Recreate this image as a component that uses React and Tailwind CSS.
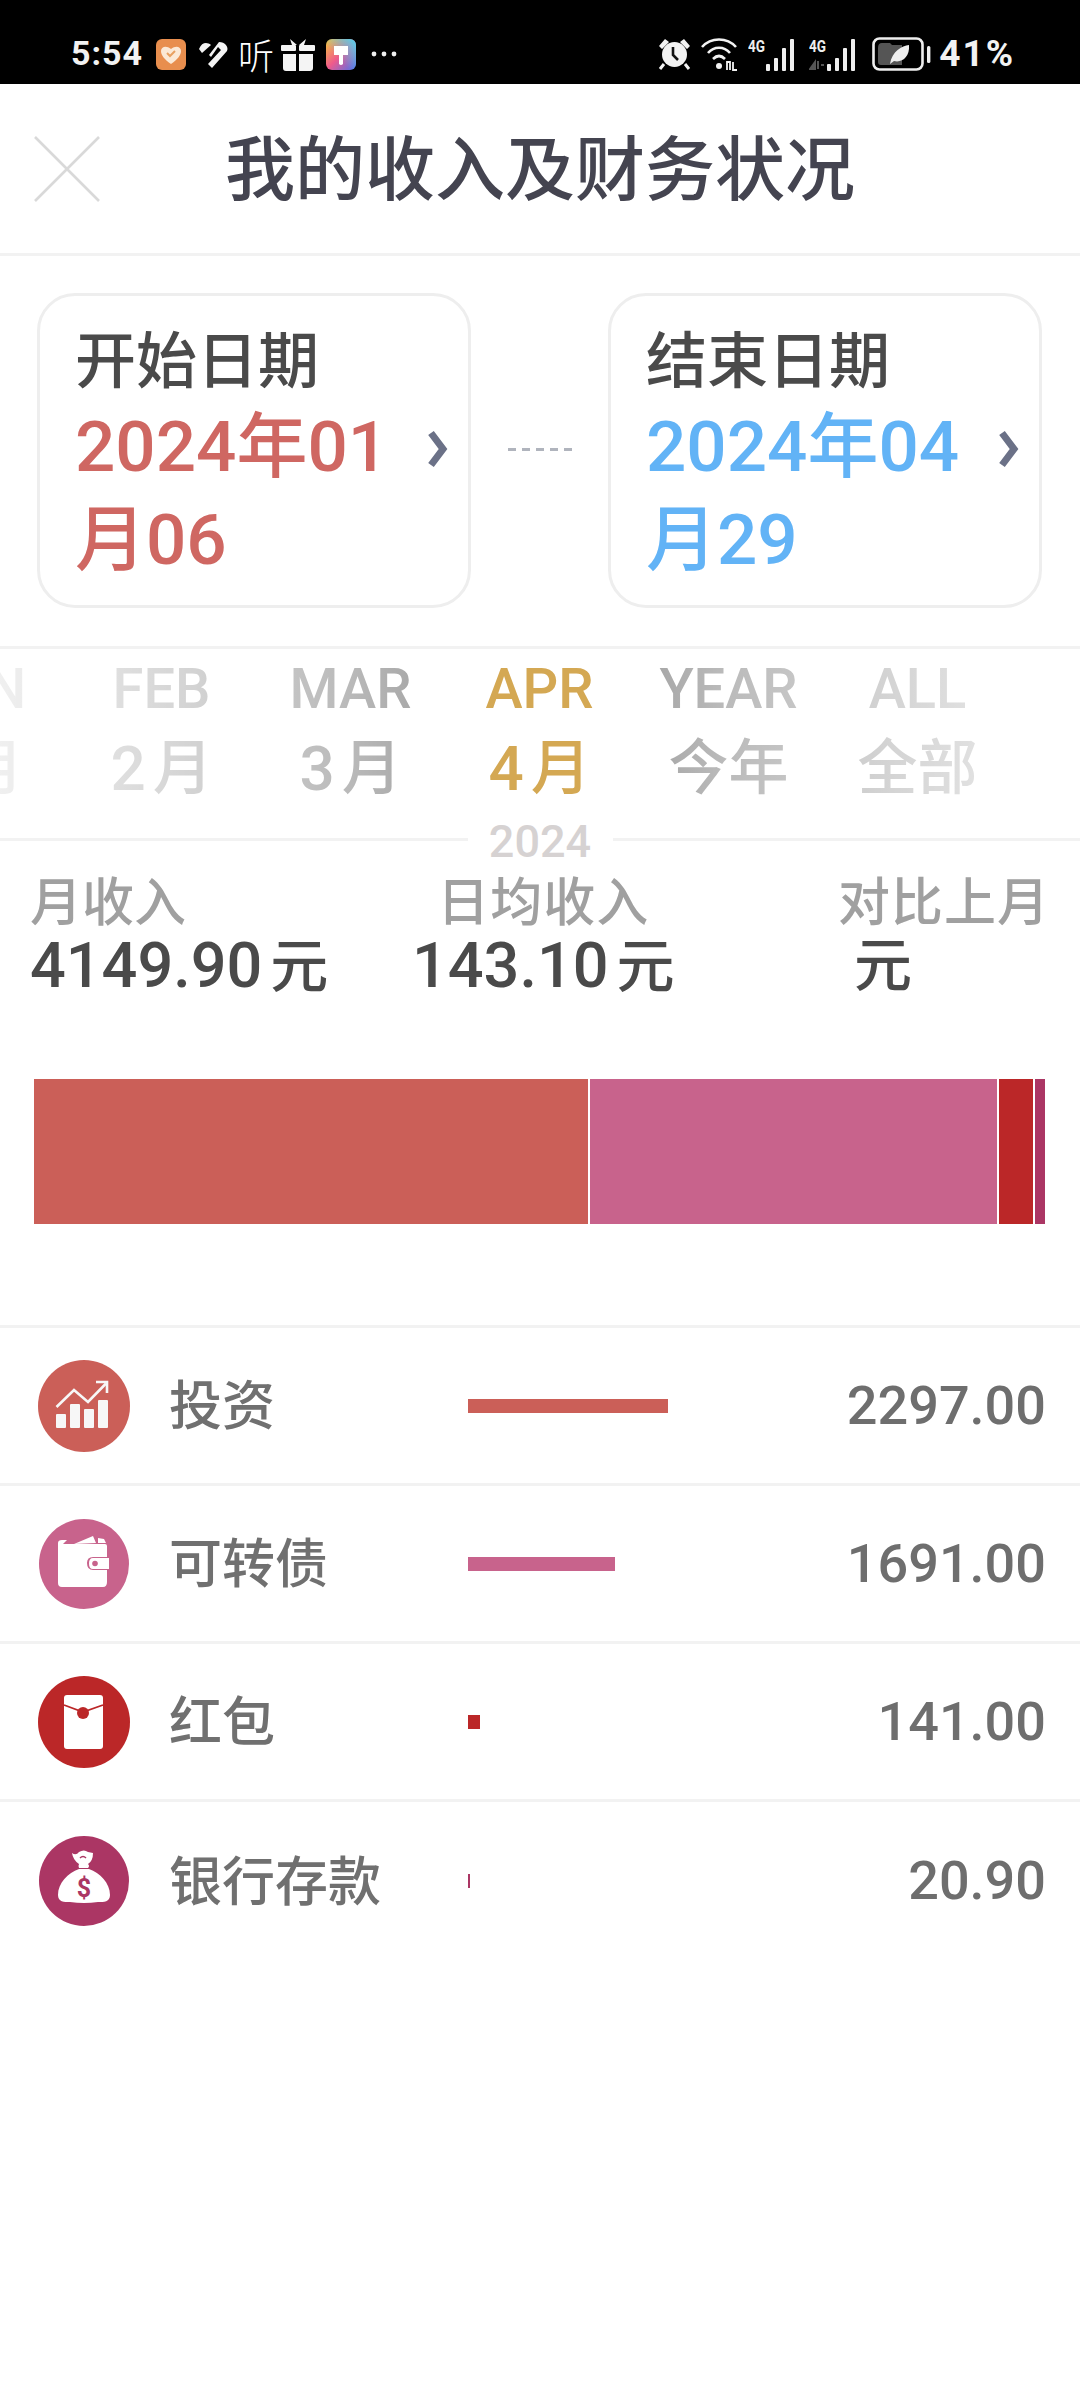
import React from "react";

const font = { fontFamily: '"Roboto","Noto Sans CJK SC",sans-serif' };

function Signal({ dim }) {
  return (
    <svg width="52" height="34" viewBox="0 0 52 34" className="block">
      <text x="0" y="15" fontSize="17" fontWeight="700" fill="#eee" fontFamily="Roboto" textLength="17" lengthAdjust="spacingAndGlyphs">4G</text>
      {dim && <path d="M1 32 L6 25 V32 Z M9 24 V32 M12 28 H15" stroke="#555" strokeWidth="2" fill="#555" />}
      <rect x="18" y="27" width="4" height="7" rx="1" fill="#f0f0f0" />
      <rect x="26" y="21" width="4" height="13" rx="1" fill="#f0f0f0" />
      <rect x="34" y="11" width="4" height="23" rx="1" fill="#f0f0f0" />
      <rect x="42" y="2" width="4" height="32" rx="1" fill="#f0f0f0" />
    </svg>
  );
}

function StatusBar() {
  return (
    <div className="h-[84px] bg-black flex items-start pt-[37px] pl-[71px] pr-[65px] text-[#f2f2f2]">
      <span className="text-[34px] leading-[32px] font-bold tracking-[1px] w-[85px]" style={font}>5:54</span>
      <div className="flex items-center">
        <svg width="30" height="31" viewBox="0 0 30 31" className="block">
          <rect width="30" height="31" rx="6" fill="#e88e4e" />
          <path d="M15 25 C8 20 5 16 5 12 C5 8 10 6 15 10 C20 6 25 8 25 12 C25 16 22 20 15 25 Z" fill="#fbe9d6" />
          <path d="M11 14 L14 17 L19 12" stroke="#e8a060" strokeWidth="2" fill="none" />
        </svg>
        <svg width="32" height="30" viewBox="0 0 32 30" className="block ml-[11px]">
          <path d="M2 10 C5 3 10 3 14 6 L5 14 Z M12 16 L22 3 C28 3 32 8 30 12 L15 29 L11 25 L24 11 L21 8 L14 18 Z" fill="#f4f4f4" />
        </svg>
        <span className="ml-[9px] text-[36px] leading-[34px] font-thin w-[35px] text-white" style={{ fontFamily: '"Noto Sans CJK SC",sans-serif', fontWeight: 300 }}>听</span>
        <svg width="34" height="34" viewBox="0 0 34 34" className="block ml-[8px]">
          <path d="M9 2 L16 8 H11 Z M25 2 L18 8 H23 Z" fill="#f4f4f4" />
          <rect x="0" y="8" width="15" height="6" rx="1" fill="#f4f4f4" />
          <rect x="18" y="8" width="16" height="6" rx="1" fill="#f4f4f4" />
          <path d="M2 17 H15 V34 H5 Q2 34 2 31 Z M18 17 H32 V31 Q32 34 29 34 H18 Z" fill="#f4f4f4" />
        </svg>
        <svg width="30" height="31" viewBox="0 0 30 31" className="block ml-[11px]">
          <defs>
            <linearGradient id="pg" x1="0" y1="0" x2="1" y2="1">
              <stop offset="0" stopColor="#f5c83a" />
              <stop offset="0.5" stopColor="#ef5a8c" />
              <stop offset="1" stopColor="#4a72f0" />
            </linearGradient>
            <linearGradient id="pg2" x1="1" y1="0" x2="0" y2="1">
              <stop offset="0" stopColor="#4ad8f0" stopOpacity="1" />
              <stop offset="0.6" stopColor="#4ad8f0" stopOpacity="0" />
            </linearGradient>
          </defs>
          <rect width="30" height="31" rx="6" fill="url(#pg)" />
          <rect width="30" height="31" rx="6" fill="url(#pg2)" />
          <path d="M8 7 H22 V16 H17 V25 Q15 27 13 25 V16 H8 Z" fill="#fff" />
        </svg>
        <svg width="26" height="8" viewBox="0 0 26 8" className="block ml-[15px]">
          <circle cx="3" cy="4" r="2.4" fill="#eee" />
          <circle cx="13" cy="4" r="2.4" fill="#eee" />
          <circle cx="23" cy="4" r="2.4" fill="#eee" />
        </svg>
      </div>
      <div className="ml-auto flex items-center">
        <svg width="33" height="33" viewBox="0 0 33 33" className="block">
          <path d="M1 8 L7 1 L11 4 L4 11 Z M32 8 L26 1 L22 4 L29 11 Z" fill="#f2f2f2" />
          <circle cx="16.5" cy="16.5" r="12.5" fill="#f2f2f2" />
          <path d="M15 9 V17 L20 22" stroke="#111" strokeWidth="2.6" fill="none" />
          <path d="M6 26 L2 31 M27 26 L31 31" stroke="#f2f2f2" strokeWidth="3" />
        </svg>
        <svg width="38" height="34" viewBox="0 0 38 34" className="block ml-[10px]">
          <path d="M1 10 C10 0 26 0 35 10" stroke="#f2f2f2" strokeWidth="2.6" fill="none" />
          <path d="M7 16 C13 9 23 9 29 16" stroke="#f2f2f2" strokeWidth="2.6" fill="none" />
          <path d="M12 22 C16 18 20 18 24 22" stroke="#f2f2f2" strokeWidth="2.6" fill="none" />
          <circle cx="18" cy="29" r="3" fill="#f2f2f2" />
          <path d="M26 33 V25 L29 25 V33 M32 25 V33 L36 33" stroke="#f2f2f2" strokeWidth="1.8" fill="none" />
        </svg>
        <div className="ml-[9px]"><Signal /></div>
        <div className="ml-[9px]"><Signal dim /></div>
        <svg width="60" height="34" viewBox="0 0 60 34" className="block ml-[11px]">
          <rect x="1.5" y="1.5" width="49" height="31" rx="6" fill="none" stroke="#eee" strokeWidth="2.6" />
          <path d="M6 11 Q6 6 10 6 H18 L20 8 H30 V28 H9 Q6 28 6 25 Z" fill="#555" />
          <path d="M18 27 C20 14 30 9 37 8 C38 20 30 26 22 24 Z" fill="#eee" />
          <rect x="55" y="9" width="3.4" height="17" rx="1.5" fill="#eee" />
        </svg>
        <span className="ml-[7px] text-[37px] leading-[32px] font-bold tracking-[2px]" style={font}>41%</span>
      </div>
    </div>
  );
}

function Header() {
  return (
    <div className="h-[172px] border-b-[3px] border-[#f2f2f2] grid grid-cols-[1fr_auto_1fr] items-center">
      <svg width="66" height="66" viewBox="0 0 66 66" className="block ml-[34px] mt-[1px]">
        <path d="M1 1 L65 65 M65 1 L1 65" stroke="#d9d9d9" strokeWidth="2.6" />
      </svg>
      <div className="text-[70px] leading-[80px] font-medium text-[#444450] mt-[4px]" style={font}>我的收入及财务状况</div>
      <div />
    </div>
  );
}

function DateCard({ label, date, color }) {
  return (
    <div className="relative w-[434px] h-[315px] border-[3px] border-[#eeeeee] rounded-[38px] pl-[35px] pt-[28px]">
      <div className="text-[61px] leading-[76px] font-medium text-[#4a4a4a]" style={font}>{label}</div>
      <div className={`w-[340px] text-[71px] leading-[93px] font-medium ${color}`} style={font}>{date}</div>
      <svg width="22" height="38" viewBox="0 0 22 38" className="absolute right-[19px] top-[134px]">
        <path d="M4 3 L16 19 L4 35" stroke="#6b7187" strokeWidth="7" fill="none" />
      </svg>
    </div>
  );
}

function Dates() {
  return (
    <div className="h-[393px] border-b-[3px] border-[#f2f2f2] flex items-start pt-[37px] pl-[37px]">
      <DateCard label="开始日期" date="2024年01月06" color="text-[#cf6762]" />
      <div className="w-[137px] flex justify-center gap-[6px] pt-[155px]">
        <div className="w-[8px] h-[3px] bg-[#b0b4bd]" />
        <div className="w-[8px] h-[3px] bg-[#b0b4bd]" />
        <div className="w-[8px] h-[3px] bg-[#b0b4bd]" />
        <div className="w-[8px] h-[3px] bg-[#b0b4bd]" />
        <div className="w-[8px] h-[3px] bg-[#b0b4bd]" />
      </div>
      <DateCard label="结束日期" date="2024年04月29" color="text-[#62b3f6]" />
    </div>
  );
}

const months = [
  ["JAN", "1", "月", "text-[#999999]"],
  ["FEB", "2", "月", "text-[#999999]"],
  ["MAR", "3", "月", "text-[#999999]"],
  ["APR", "4", "月", "text-[#d4a853]"],
  ["YEAR", "", "今年", "text-[#999999]"],
  ["ALL", "", "全部", "text-[#999999]"],
];

function Months() {
  return (
    <div className="relative h-[178px] overflow-hidden">
      <div className="flex ml-[-122px] pt-[8px]">
        {months.map(([en, num, zh, c]) => (
          <div key={en} className={`w-[189px] shrink-0 flex flex-col items-center font-medium ${c}`} style={font}>
            <div className="text-[56px] leading-[64px]">{en}</div>
            <div className="flex gap-[7px] text-[60px] leading-[82px] mt-[7px] whitespace-nowrap">
              {num && <span className="text-[62px]">{num}</span>}
              <span>{zh}</span>
            </div>
          </div>
        ))}
      </div>
      <div className="absolute inset-0 bg-[linear-gradient(to_right,rgba(255,255,255,0.85)_0%,rgba(255,255,255,0.62)_15%,rgba(255,255,255,0.33)_32%,rgba(255,255,255,0)_44%,rgba(255,255,255,0)_56%,rgba(255,255,255,0.33)_67%,rgba(255,255,255,0.62)_85%,rgba(255,255,255,0.85)_100%)]" />
    </div>
  );
}

function YearDivider() {
  return (
    <div className="flex items-center h-[24px]">
      <div className="flex-1 h-[3px] bg-[#f2f2f2]" />
      <div className="w-[145px] text-center text-[45px] leading-[24px] font-medium text-[#d6d2d2] mt-[5px]" style={font}>2024</div>
      <div className="flex-1 h-[3px] bg-[#f2f2f2]" />
    </div>
  );
}

function Stats() {
  return (
    <div className="flex h-[228px] pl-[30px] pr-[30px] pt-[22px]" style={font}>
      <div className="w-[300px] shrink-0">
        <div className="text-[52px] leading-[62px] font-medium text-[#a0a0a0]">月收入</div>
        <div className="text-[63px] leading-[62px] font-medium text-[#4a4a4a] whitespace-nowrap">4149.90<span className="text-[58px] ml-[8px]">元</span></div>
      </div>
      <div className="flex flex-col items-center ml-[82px]">
        <div className="text-[52px] leading-[62px] font-medium text-[#a0a0a0] tracking-[1px]">日均收入</div>
        <div className="text-[63px] leading-[62px] font-medium text-[#4a4a4a] whitespace-nowrap">143.10<span className="text-[58px] ml-[8px]">元</span></div>
      </div>
      <div className="ml-auto">
        <div className="text-[52px] leading-[62px] font-medium text-[#a0a0a0] tracking-[1px]">对比上月</div>
        <div className="text-[58px] leading-[62px] font-medium text-[#4a4a4a] pl-[16px]">元</div>
      </div>
    </div>
  );
}

function StackBar() {
  return (
    <div className="flex h-[145px] ml-[34px] w-[1011px] mb-[101px] gap-[2px]">
      <div className="w-[554px] bg-[#cb5f58]" />
      <div className="w-[407px] bg-[#c8638c]" />
      <div className="w-[34px] bg-[#bb2728]" />
      <div className="flex-1 bg-[#ab3664]" />
    </div>
  );
}

function IconChart() {
  return (
    <svg width="92" height="92" viewBox="0 0 92 92" className="block shrink-0">
      <circle cx="46" cy="46" r="46" fill="#cb5f58" />
      <rect x="18" y="54" width="10" height="14" rx="1" fill="#f7f7f7" />
      <rect x="32" y="44" width="10" height="24" rx="1" fill="#f7f7f7" />
      <rect x="46" y="49" width="10" height="19" rx="1" fill="#f7f7f7" />
      <rect x="60" y="40" width="10" height="28" rx="1" fill="#f7f7f7" />
      <path d="M18.5 47 L36 30 L50 42 L68 23.5" stroke="#f7f7f7" strokeWidth="2.6" fill="none" />
      <path d="M58 22 H69 V33" stroke="#f7f7f7" strokeWidth="2.6" fill="none" />
    </svg>
  );
}

function IconWallet() {
  return (
    <svg width="92" height="92" viewBox="0 0 92 92" className="block shrink-0">
      <circle cx="46" cy="46" r="45" fill="#c8638c" />
      <path d="M36 26 L55 18 L58 25 Z M60 20 L66 21 L68 25 H60 Z" fill="#fff" />
      <path d="M20 25 Q20 22 24 22 L29 22 L25 26 H67 Q69 26 69 28 V39 H55 Q49 39 49 45 Q49 52 55 52 H69 V64 Q69 69 65 69 H24 Q20 69 20 65 Z" fill="#fff" />
      <path d="M55 40 H71 V51 H55 Q51 51 51 45.5 Q51 40 55 40 Z" fill="#fff" />
      <circle cx="57" cy="45.5" r="2.8" fill="#c8638c" />
    </svg>
  );
}

function IconEnvelope() {
  return (
    <svg width="92" height="92" viewBox="0 0 92 92" className="block shrink-0">
      <circle cx="46" cy="46" r="46" fill="#bb2728" />
      <rect x="26" y="19" width="39" height="54" rx="3" fill="#fff" />
      <path d="M26 29 L45 36 L65 29" stroke="#bb2728" strokeWidth="1.8" fill="none" />
      <circle cx="45" cy="37" r="6" fill="#bb2728" />
    </svg>
  );
}

function IconBag() {
  return (
    <svg width="92" height="92" viewBox="0 0 92 92" className="block shrink-0">
      <circle cx="46" cy="46" r="45" fill="#ab3664" />
      <path d="M34 18 Q38 21 41 17 Q46 14 50 17 L55 18 Q55 26 50 29 Q52 31 50 33 H41 Q40 31 41 29 Q35 25 34 18 Z" fill="#fff" />
      <path d="M42 23 Q45 20 48 23" stroke="#ab3664" strokeWidth="1.5" fill="none" />
      <path d="M41 34 H51 C62 38 72 48 72 60 C72 67 66 67 60 67 Q46 69 32 67 C26 67 20 67 20 60 C20 48 30 38 41 34 Z" fill="#fff" />
      <text x="46" y="62" textAnchor="middle" fontSize="25" fontWeight="700" fill="#ab3664" fontFamily="Roboto">$</text>
    </svg>
  );
}

const rows = [
  { icon: <IconChart />, name: "投资", w: "w-[200px]", bar: "bg-[#cb5f58]", val: "2297.00" },
  { icon: <IconWallet />, name: "可转债", w: "w-[147px]", bar: "bg-[#c8638c]", val: "1691.00" },
  { icon: <IconEnvelope />, name: "红包", w: "w-[12px]", bar: "bg-[#bb2728]", val: "141.00" },
  { icon: <IconBag />, name: "银行存款", w: "w-[2px]", bar: "bg-[#ab3664]", val: "20.90" },
];

function Rows() {
  return (
    <div className="border-t-[3px] border-[#f2f2f2]">
      {rows.map((r, i) => (
        <div key={r.name} className={`h-[158px] flex items-center pl-[38px] pr-[34px] ${i < 3 ? "border-b-[3px] border-[#f2f2f2]" : ""}`}>
          {r.icon}
          <div className="w-[338px] shrink-0 pl-[39px] mt-[3px] text-[53px] leading-[60px] text-[#707070] font-medium whitespace-nowrap" style={font}>{r.name}</div>
          <div className={`${r.w} h-[14px] ${r.bar}`} />
          <div className="ml-auto text-[54px] leading-[60px] font-medium text-[#6e6e6e]" style={font}>{r.val}</div>
        </div>
      ))}
    </div>
  );
}

export default function App() {
  return (
    <div className="w-[1080px] h-[2400px] bg-white overflow-hidden">
      <StatusBar />
      <Header />
      <Dates />
      <Months />
      <YearDivider />
      <Stats />
      <StackBar />
      <Rows />
    </div>
  );
}
